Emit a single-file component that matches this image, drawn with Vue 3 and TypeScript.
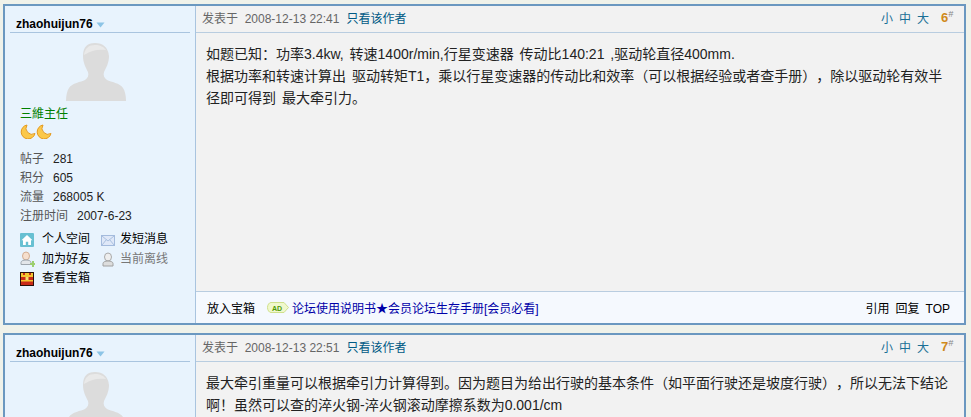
<template>
  <div class="page">
    <div v-for="post in posts" :key="post.floor" class="post">
      <aside class="side">
        <div class="author">
          <span class="name">zhaohuijun76</span>
          <svg width="9" height="6" viewBox="0 0 9 6"><path d="M0.5 0.5h8L4.5 5.5z" fill="#8cc4e6" /></svg>
        </div>
        <svg class="avatar" width="62" height="58" viewBox="0 0 62 58">
          <path d="M30 0C22 0 18 4 18 13c0 7 3 12 5 16 1 3 0 6-3 8-4 2-13 3-16 8-2 3-3 8-3 13h60c0-5-1-10-3-13-3-5-12-6-16-8-3-2-4-5-3-8 2-4 5-9 5-16C43 4 38 0 30 0z" fill="#dcdcdc" />
          <path d="M19 12c1-7 5-10 11-10 5 0 9 2 11 5-7-1-15 0-22 5z" fill="#e9e9e9" />
        </svg>
        <div class="rank">三維主任</div>
        <div class="moons">
          <svg v-for="m in 2" :key="m" width="16" height="15" viewBox="0 0 16 15">
            <path d="M7 1A7 7 0 1 0 15 9.500A6 6 0 0 1 7 1z" fill="#fbc84a" stroke="#e59a1e" stroke-width="1" />
          </svg>
        </div>
        <dl class="stats">
          <div v-for="s in stats" :key="s.label" class="stat">
            <dt>{{ s.label }}</dt>
            <dd>{{ s.value }}</dd>
          </div>
        </dl>
        <ul class="links">
          <li>
            <svg width="14" height="14" viewBox="0 0 14 14"><rect width="14" height="14" rx="1" fill="#68c0d2" /><path d="M7 2L12.500 7.200H11V12H8.200V8.800H5.800V12H3V7.200H1.500z" fill="#fff" /></svg>
            个人空间
          </li>
          <li>
            <svg width="14" height="14" viewBox="0 0 14 14"><rect x="0.500" y="2.500" width="13" height="10" fill="#dfe8f8" stroke="#a4bbdd" /><path d="M1 3l6 5 6-5M1 12l4.500-5.500M13 12L8.500 6.500" fill="none" stroke="#a9c0e0" /></svg>
            发短消息
          </li>
          <li>
            <svg width="15" height="16" viewBox="0 0 15 16"><ellipse cx="6" cy="5" rx="3.500" ry="4" fill="#f6dfcd" stroke="#d2ad92" /><path d="M1 13.500V11.500C1 10 3 9 6 9s5 1 5 2.500v2z" fill="#e3e6ea" stroke="#9ea6ae" /><path d="M10 12h2V10h2v2h1v2h-1v2h-2v-2h-2z" fill="#9bcf6e" /></svg>
            加为好友
          </li>
          <li class="off">
            <svg width="14" height="15" viewBox="0 0 14 15"><ellipse cx="7" cy="5" rx="3.500" ry="4" fill="#eeeeee" stroke="#aaaaaa" /><path d="M2 14V11.500C2 10 4 9 7 9s5 1 5 2.500V14z" fill="#dddddd" stroke="#a0a0a0" /></svg>
            当前离线
          </li>
          <li>
            <svg width="14" height="14" viewBox="0 0 14 14"><rect width="14" height="14" fill="#2a0f08" /><rect x="1" y="1" width="12" height="12" fill="#c92a18" /><path d="M1 1h2v2h2V1h4v2h2V1h2v4H1z" fill="#f4c430" /><rect x="1" y="8" width="12" height="1.500" fill="#f4c430" /><rect x="5.500" y="5" width="3" height="3" fill="#f7dd70" /></svg>
            查看宝箱
          </li>
        </ul>
      </aside>
      <section class="main">
        <header class="head">
          <span class="time">发表于&nbsp; {{ post.time }}</span>
          <a class="only">只看该作者</a>
          <span class="sizes"><a>小</a><a>中</a><a>大</a></span>
          <span class="floor">{{ post.floor }}<sup>#</sup></span>
        </header>
        <div class="body">
          <p v-for="(line, i) in post.lines" :key="i">{{ line }}</p>
        </div>
        <footer class="foot">
          <span class="box">放入宝箱</span>
          <svg class="ad" width="22" height="11" viewBox="0 0 22 11">
            <path d="M4 .5h13L21.500 5.500 17 10.500H4C2 10.500.5 8 .5 5.500S2 .5 4 .5z" fill="#f0f8cc" stroke="#cfe08c" />
            <text x="5" y="8.500" class="ad-text">AD</text>
          </svg>
          <a class="notice">论坛使用说明书★会员论坛生存手册[会员必看]</a>
          <span class="tools"><a>引用</a><a>回复</a><a>TOP</a></span>
        </footer>
      </section>
    </div>
  </div>
</template>

<script setup lang="ts">
interface Post {
  floor: number
  time: string
  lines: string[]
}

const stats = [
  { label: '帖子', value: '281' },
  { label: '积分', value: '605' },
  { label: '流量', value: '268005 K' },
  { label: '注册时间', value: '2007-6-23' }
]

const posts: Post[] = [
  {
    floor: 6,
    time: '2008-12-13 22:41',
    lines: [
      '如题已知：功率3.4kw, 转速1400r/min,行星变速器 传动比140:21 ,驱动轮直径400mm.',
      '根据功率和转速计算出 驱动转矩T1，乘以行星变速器的传动比和效率（可以根据经验或者查手册），除以驱动轮有效半径即可得到 最大牵引力。'
    ]
  },
  {
    floor: 7,
    time: '2008-12-13 22:51',
    lines: [
      '最大牵引重量可以根据牵引力计算得到。因为题目为给出行驶的基本条件（如平面行驶还是坡度行驶），所以无法下结论啊！虽然可以查的淬火钢-淬火钢滚动摩擦系数为0.001/cm'
    ]
  }
]
</script>

<style>
html,
body {
  background: #f0f2ea;
  overflow: hidden;
}
</style>

<style scoped>
.page {
  padding: 4px 5px 0 3px;
  display: flex;
  flex-direction: column;
  gap: 8px;
  font-family: "Liberation Sans", "Noto Sans CJK SC", sans-serif;
  font-size: 12px;
  color: #000;
  text-spacing-trim: space-all;
}
.post {
  display: flex;
  height: 321px;
  flex-shrink: 0;
  border: 2px solid #6b98c0;
  box-sizing: border-box;
  background: #f2f2f2;
}
.side {
  width: 191px;
  flex-shrink: 0;
  box-sizing: border-box;
  background: #e8f3fd;
  border-right: 1px solid #a9c4df;
  padding: 0 5px;
}
.author {
  height: 27px;
  padding: 11px 0 0 6px;
  box-sizing: border-box;
  border-bottom: 1px solid #a9c4df;
  line-height: 15px;
  display: flex;
  align-items: center;
  gap: 3px;
}
.name {
  font-weight: bold;
  font-size: 12px;
}
.avatar {
  display: block;
  margin: 10px 0 0 55px;
}
.rank {
  margin: 5px 0 0 10px;
  color: #008000;
  line-height: 16px;
}
.moons {
  display: flex;
  margin: 2px 0 0 10px;
  height: 16px;
}
.stats {
  margin: 10px 0 0 10px;
}
.stat {
  display: flex;
  align-items: baseline;
  gap: 9px;
  height: 19px;
  line-height: 19px;
}
dt {
  color: #555;
}
dd {
  margin: 0;
  color: #222;
}
.links {
  list-style: none;
  margin: 4px 0 0 10px;
  padding: 0;
  display: grid;
  grid-template-columns: 81px 80px;
  grid-auto-rows: 19.500px;
}
.links li {
  display: flex;
  align-items: center;
  gap: 8px;
  line-height: 19px;
}
.links li:nth-child(even) {
  gap: 5px;
}
.links li:nth-child(3) {
  gap: 7px;
}
.links li.off {
  color: #777;
}
.main {
  flex: 1;
  display: flex;
  flex-direction: column;
  min-width: 0;
}
.head {
  height: 27px;
  flex-shrink: 0;
  padding: 0 8px 3px 6px;
  box-sizing: border-box;
  border-bottom: 1px solid #b9cde0;
  display: flex;
  align-items: center;
  color: #666;
}
.only {
  margin-left: 7px;
  color: #005a85;
}
.sizes {
  margin-left: auto;
  display: flex;
  gap: 6px;
  color: #1a6f96;
}
.floor {
  margin-left: 12px;
  color: #d08a1c;
  font-weight: bold;
  font-size: 13px;
  width: 15px;
}
.floor sup {
  font-size: 9px;
  font-weight: normal;
  font-style: italic;
  color: #888;
  line-height: 0;
}
.body {
  flex: 1;
  padding: 10px 14px 0 10px;
  font-size: 14px;
  line-height: 22px;
  word-spacing: 2px;
  color: #222;
}
.body p {
  margin: 0;
}
.foot {
  height: 31px;
  flex-shrink: 0;
  border-top: 1px solid #b9cde0;
  background: #f5f9fe;
  display: flex;
  align-items: center;
  padding: 0 14px 0 11px;
}
.ad {
  margin-left: 12px;
}
.ad-text {
  font-size: 7px;
  font-weight: bold;
  fill: #4e9a06;
}
.notice {
  margin-left: 3px;
  color: #0000a8;
}
.tools {
  margin-left: auto;
  display: flex;
  align-items: baseline;
  gap: 6px;
}
</style>
